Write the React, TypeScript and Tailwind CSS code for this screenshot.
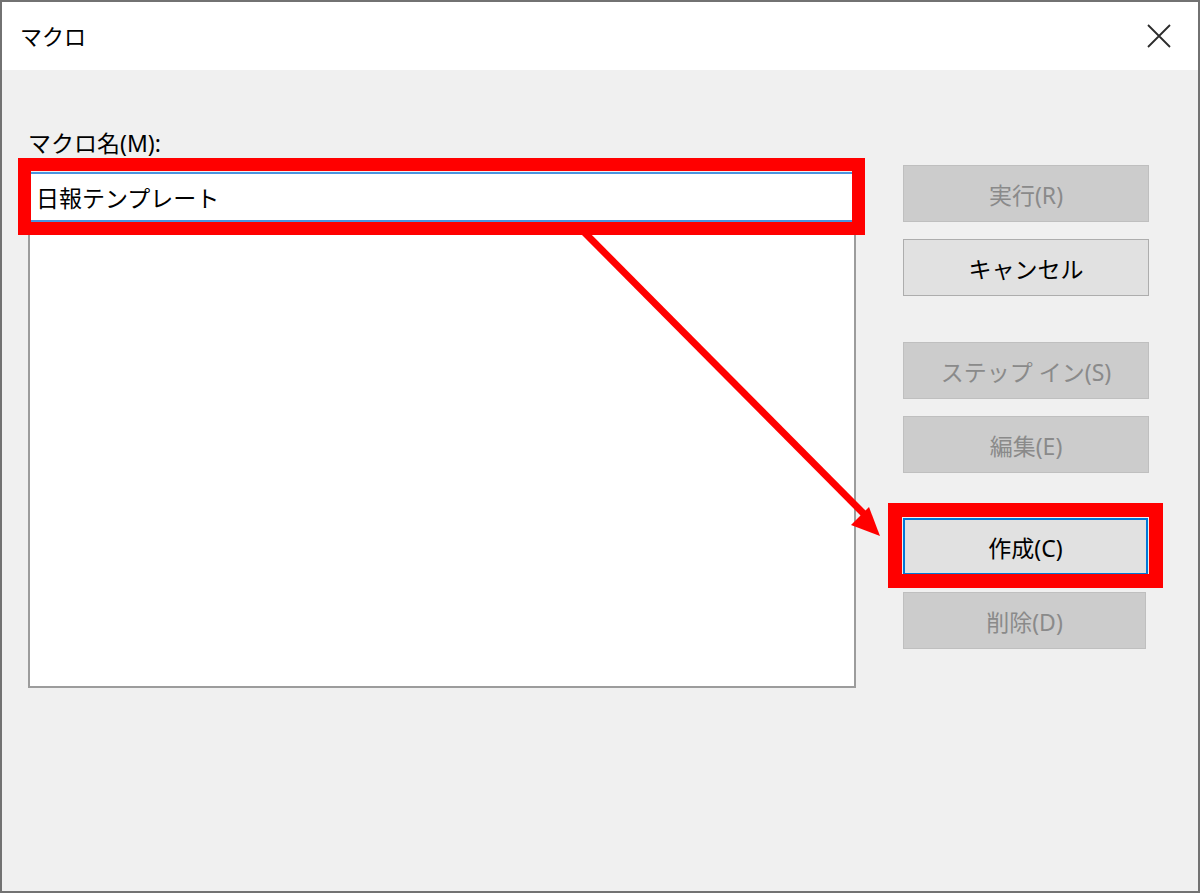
import React from "react";

const font = { fontFamily: '"Noto Sans", "Noto Sans CJK JP", sans-serif' };

function Btn({ label, disabled, focused, w = "w-[246px]" }: { label: string; disabled?: boolean; focused?: boolean; w?: string }) {
  const cls = disabled
    ? "bg-[#cccccc] border border-[#bfbfbf] text-[#8a8a8a]"
    : focused
    ? "bg-[#e1e1e1] border-2 border-[#0078d7] text-black"
    : "bg-[#e1e1e1] border border-[#adadad] text-black";
  return (
    <div className={`${w} h-[57px] flex items-center justify-center pt-[4px] text-[23px] leading-none ${cls}`}>
      {label}
    </div>
  );
}

export default function App() {
  return (
    <div
      className="relative w-[1200px] h-[893px] border-2 border-[#727272] bg-[#f0f0f0] overflow-hidden"
      style={font}
    >
      {/* Title bar */}
      <div className="h-[68px] bg-white flex items-center justify-between pl-[18px] pr-[26px]">
        <span className="text-[22px] text-black leading-none">マクロ</span>
        <svg width="26" height="26" viewBox="0 0 26 26">
          <path d="M2 2 L24 24 M24 2 L2 24" stroke="#2b2b2b" strokeWidth="1.8" />
        </svg>
      </div>

      {/* Body */}
      <div className="flex items-start">
        {/* Left column */}
        <div className="ml-[26px] mt-[58px] w-[828px] flex flex-col">
          <div className="h-[30px] text-[23px] leading-[30px] text-black">マクロ名(M):</div>
          <div className="mt-[14px] h-[50px] bg-white border-t-2 border-b-2 border-[#4a94df] flex items-center pl-[8px] pt-[2px] text-[23px] text-black leading-none">
            日報テンプレート
          </div>
          <div className="h-[466px] bg-white border-2 border-t-0 border-[#9c9c9c]" />
        </div>

        {/* Right column */}
        <div className="ml-[47px] mt-[95px] flex flex-col">
          <Btn label="実行(R)" disabled />
          <div className="mt-[17px]">
            <Btn label="キャンセル" />
          </div>
          <div className="mt-[46px]">
            <Btn label="ステップ イン(S)" disabled />
          </div>
          <div className="mt-[17px]">
            <Btn label="編集(E)" disabled />
          </div>
          <div className="mt-[45px]">
            <Btn label="作成(C)" focused w="w-[245px]" />
          </div>
          <div className="mt-[17px]">
            <Btn label="削除(D)" disabled w="w-[243px]" />
          </div>
        </div>
      </div>

      {/* Red highlight boxes (overlay) */}
      <div className="absolute left-[16px] top-[156px] w-[847px] h-[77px] border-[13px] border-[#ff0000] pointer-events-none" />
      <div className="absolute left-[886px] top-[501px] w-[275px] h-[85px] border-[14px] border-[#ff0000] pointer-events-none" />

      {/* Arrow */}
      <svg className="absolute left-[-2px] top-[-2px] pointer-events-none" width="1200" height="893" viewBox="0 0 1200 893">
        <line x1="581" y1="229" x2="864" y2="514" stroke="#ff0000" strokeWidth="7" />
        <polygon points="880,536 869,507 851,525" fill="#ff0000" />
      </svg>
    </div>
  );
}
